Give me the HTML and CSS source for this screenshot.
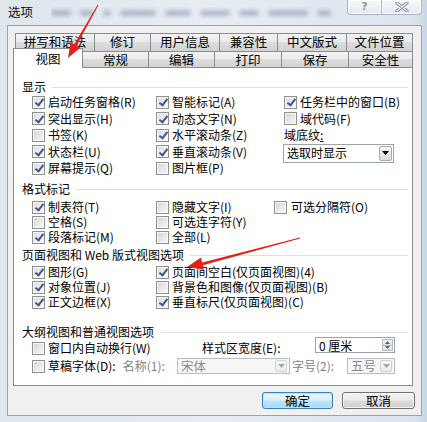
FILE: index.html
```html
<!DOCTYPE html>
<html lang="zh-CN">
<head>
<meta charset="utf-8">
<title>选项</title>
<link rel="stylesheet" href="styles.css">
</head>
<body>
<div class="screen">
  <div class="titlebar">
    <span class="title">选项</span>
    <div class="blur-strip">
      <i class="w20"></i><i class="w14"></i><i class="w8"></i><i class="w36"></i><i class="w26"></i><i class="w30"></i><i class="w20"></i><i class="w40"></i><i class="w14"></i><i class="w26"></i>
    </div>
    <div class="caption">
      <span class="cbtn help">?</span>
      <span class="cbtn close"><svg width="14" height="10" viewBox="0 0 14 10"><path d="M2 1 L12 9 M12 1 L2 9" stroke="#7b8796" stroke-width="3.2" stroke-linecap="round"/><path d="M2 1 L12 9 M12 1 L2 9" stroke="#f7f9fb" stroke-width="1.4" stroke-linecap="round"/></svg></span>
    </div>
  </div>

  <div class="client">
    <div class="tabrow back">
      <div class="tab t80">拼写和语法</div>
      <div class="tab t57">修订</div>
      <div class="tab t70">用户信息</div>
      <div class="tab t59">兼容性</div>
      <div class="tab t70">中文版式</div>
      <div class="tab t67">文件位置</div>
    </div>
    <div class="tabrow front">
      <div class="tab sel t70">视图</div>
      <div class="tab t67">常规</div>
      <div class="tab t67">编辑</div>
      <div class="tab t68">打印</div>
      <div class="tab t68">保存</div>
      <div class="tab t65">安全性</div>
    </div>

    <div class="panel">
      <div class="gtitle">显示</div>
      <div class="grid g1">
        <label class="cbl"><span class="cb on"></span>启动任务窗格(R)</label>
        <label class="cbl"><span class="cb on"></span>智能标记(A)</label>
        <label class="cbl"><span class="cb on"></span>任务栏中的窗口(B)</label>

        <label class="cbl"><span class="cb on"></span>突出显示(H)</label>
        <label class="cbl"><span class="cb on"></span>动态文字(N)</label>
        <label class="cbl"><span class="cb"></span>域代码(F)</label>

        <label class="cbl"><span class="cb"></span>书签(K)</label>
        <label class="cbl"><span class="cb on"></span>水平滚动条(Z)</label>
        <span class="plain">域底纹<u>:</u></span>

        <label class="cbl"><span class="cb on"></span>状态栏(U)</label>
        <label class="cbl"><span class="cb on"></span>垂直滚动条(V)</label>
        <div class="combo shade"><span class="ctext">选取时显示</span><span class="carrow"><svg width="7" height="4" viewBox="0 0 7 4"><path d="M0 0 H7 L3.5 4 Z" fill="#000"/></svg></span></div>

        <label class="cbl"><span class="cb on"></span>屏幕提示(Q)</label>
        <label class="cbl"><span class="cb"></span>图片框(P)</label>
      </div>

      <div class="gtitle s2">格式标记</div>
      <div class="grid g2">
        <label class="cbl"><span class="cb on"></span>制表符(T)</label>
        <label class="cbl"><span class="cb"></span>隐藏文字(I)</label>
        <label class="cbl wide"><span class="cb"></span>可选分隔符(O)</label>

        <label class="cbl"><span class="cb"></span>空格(S)</label>
        <label class="cbl"><span class="cb"></span>可选连字符(Y)</label>
        <span></span>

        <label class="cbl"><span class="cb on"></span>段落标记(M)</label>
        <label class="cbl"><span class="cb"></span>全部(L)</label>
        <span></span>
      </div>

      <div class="gtitle s3">页面视图和 Web 版式视图选项</div>
      <div class="grid g3">
        <label class="cbl"><span class="cb on"></span>图形(G)</label>
        <label class="cbl"><span class="cb on"></span>页面间空白(仅页面视图)(4)</label>

        <label class="cbl"><span class="cb on"></span>对象位置(J)</label>
        <label class="cbl"><span class="cb"></span>背景色和图像(仅页面视图)(B)</label>

        <label class="cbl"><span class="cb on"></span>正文边框(X)</label>
        <label class="cbl"><span class="cb on"></span>垂直标尺(仅页面视图)(C)</label>
      </div>

      <div class="gtitle s4">大纲视图和普通视图选项</div>
      <div class="row4">
        <label class="cbl w170"><span class="cb"></span>窗口内自动换行(W)</label>
        <span class="plain w113">样式区宽度(E):</span>
        <div class="spin"><span class="ctext">0 厘米</span><span class="sarrows"><span class="sbtn"><svg width="5" height="3" viewBox="0 0 5 3"><path d="M0 3 H5 L2.5 0 Z" fill="#58606a"/></svg></span><span class="sbtn"><svg width="5" height="3" viewBox="0 0 5 3"><path d="M0 0 H5 L2.5 3 Z" fill="#58606a"/></svg></span></span></div>
      </div>
      <div class="row4">
        <label class="cbl w145"><span class="cb"></span>草稿字体(D):<span class="dis name">名称(1):</span></label>
        <div class="combo off font"><span class="ctext">宋体</span><span class="carrow"><svg width="7" height="4" viewBox="0 0 7 4"><path d="M0 0 H7 L3.5 4 Z" fill="#a3a8ae"/></svg></span></div>
        <span class="dis size">字号(2):</span>
        <div class="combo off fsize"><span class="ctext">五号</span><span class="carrow"><svg width="7" height="4" viewBox="0 0 7 4"><path d="M0 0 H7 L3.5 4 Z" fill="#a3a8ae"/></svg></span></div>
      </div>
    </div>

    <div class="btns">
      <button class="btn def">确定</button>
      <button class="btn">取消</button>
    </div>
  </div>

  <svg class="arrows" width="427" height="422" viewBox="0 0 427 422">
    <polygon points="98.4,5.2 97.6,4.8 74.2,44.3 70.6,42.2 68,58 80.2,47.7 76.6,45.6" fill="#e3211c"/>
    <polygon points="300.1,238.4 299.9,237.6 202.1,262.5 201,257.6 187,267 204,269.7 202.9,265.3" fill="#e3211c"/>
  </svg>
</div>
</body>
</html>
```
FILE: styles.css
```css
* { box-sizing: border-box; }
html, body { margin: 0; padding: 0; }
body {
  font-family: "Noto Sans CJK SC", "Noto Sans", sans-serif;
  font-size: 12px;
  color: #000;
}
.screen {
  width: 427px;
  height: 422px;
  position: relative;
  overflow: hidden;
  background: linear-gradient(90deg, #dfe6ee 0%, #e8edf3 50%, #dbe4ee 97%, #c6d6e6 100%);
}

/* title bar */
.titlebar { height: 25px; display: flex; align-items: flex-start; }
.title { margin: 4px 0 0 8px; font-size: 12.5px; line-height: 16px; color: #111; }
.blur-strip {
  flex: 1;
  display: flex;
  gap: 9px;
  align-items: center;
  height: 12px;
  margin: 7px 10px 0 18px;
  overflow: hidden;
}
.blur-strip i {
  display: block;
  flex: none;
  height: 6px;
  background: rgba(85, 105, 135, 0.38);
  filter: blur(2px);
  border-radius: 3px;
}
.blur-strip .w8 { width: 8px; }
.blur-strip .w14 { width: 14px; }
.blur-strip .w20 { width: 20px; }
.blur-strip .w26 { width: 26px; }
.blur-strip .w30 { width: 30px; }
.blur-strip .w36 { width: 36px; }
.blur-strip .w40 { width: 40px; }
.caption { display: flex; margin-right: 5px; }
.cbtn {
  height: 15px;
  border: 1px solid #aab4c0;
  border-top: none;
  background: linear-gradient(#f6f8fa, #e4e9ef);
  display: flex;
  align-items: center;
  justify-content: center;
  box-shadow: inset 0 0 0 1px rgba(255,255,255,0.8);
}
.cbtn.help {
  width: 35px;
  border-radius: 0 0 0 4px;
  font-family: "DejaVu Sans", sans-serif;
  font-size: 11px;
  font-weight: bold;
  line-height: 12px;
  color: #8a95a3;
}
.cbtn.close { width: 40px; border-left: none; border-radius: 0 0 4px 0; }

/* client area */
.client {
  margin-left: 7px;
  width: 415px;
  height: 391px;
  border: 1px solid #98a3b1;
  background: #f0f0f0;
  padding: 7px 0 0 5px;
}

/* tabs */
.tabrow { display: flex; }
.tabrow.back { margin-left: 2px; height: 18px; }
.tabrow.front {
  margin-top: -3px;
  height: 20px;
  align-items: flex-end;
  position: relative;
  z-index: 2;
}
.tab {
  flex: none;
  border: 1px solid #898c95;
  border-bottom: none;
  background: linear-gradient(#f3f3f3 0%, #ebebeb 45%, #dddddd 50%, #d2d2d2 100%);
  text-align: center;
  font-size: 12.5px;
  line-height: 14px;
  padding-top: 1px;
  margin-right: -1px;
  height: 18px;
}
.tabrow.front .tab { height: 16px; margin-bottom: 1px; padding-top: 0; line-height: 15px; }
.tabrow.front .tab.sel {
  height: 20px;
  margin-bottom: 0;
  padding-top: 2px;
  line-height: 16px;
  background: #fff;
}
.t57 { width: 57px; }
.t59 { width: 59px; }
.t65 { width: 65px; }
.t67 { width: 67px; }
.t68 { width: 68px; }
.t70 { width: 70px; }
.t80 { width: 80px; }

/* panel */
.panel {
  position: relative;
  z-index: 1;
  margin-top: -1px;
  width: 400px;
  height: 319px;
  border: 1px solid #898c95;
  background: #fff;
  padding: 12px 4px 0 8px;
}
.gtitle {
  height: 14px;
  line-height: 14px;
  display: flex;
  align-items: center;
  white-space: nowrap;
}
.gtitle::after {
  content: "";
  flex: 1;
  height: 1px;
  background: #dcdfe3;
  margin-left: 6px;
}
.gtitle.s2 { margin-top: 5.5px; }
.gtitle.s3 { margin-top: 3.5px; }
.gtitle.s4 { margin-top: 15.5px; }

.grid { display: grid; margin-left: 10px; align-items: center; }
.g1 { grid-template-columns: 124px 128px 1fr; grid-template-rows: repeat(5, 16.5px); }
.g2 { grid-template-columns: 124px 118px 1fr; grid-template-rows: repeat(3, 15px); margin-top: 3.5px; }
.g3 { grid-template-columns: 124px 1fr; grid-template-rows: repeat(3, 15px); margin-top: 2.5px; }
.g2 .wide { gap: 4px; }

.cbl {
  display: flex;
  align-items: center;
  gap: 3px;
  white-space: nowrap;
  line-height: 14px;
}
.plain { white-space: nowrap; line-height: 14px; }
.plain u { text-decoration: underline; }
.cb {
  flex: none;
  width: 13px;
  height: 13px;
  border: 1px solid #8e8f8f;
  background: linear-gradient(135deg, #d2d2d2 0%, #e9e9e9 55%, #f8f8f8 100%);
  box-shadow: inset 0 0 0 1px #f7f7f7;
  position: relative;
}
.cb.on { background: linear-gradient(135deg, #dadada 0%, #eeeeee 55%, #fbfbfb 100%); }
.cb.on::after {
  content: "";
  position: absolute;
  left: 3.5px;
  top: 0.5px;
  width: 3px;
  height: 7px;
  border: solid #3e5689;
  border-width: 0 2px 2px 0;
  transform: rotate(38deg);
}

/* combos */
.combo {
  display: flex;
  align-items: center;
  justify-content: space-between;
  border: 1px solid #9ca3ab;
  background: #fff;
  padding: 1px 1px 1px 3px;
}
.combo .ctext { line-height: 14px; white-space: nowrap; }
.carrow {
  width: 13px;
  height: 100%;
  border: 1px solid #a7acb2;
  border-radius: 2px;
  background: linear-gradient(#f4f4f4, #dcdcdc);
  display: flex;
  align-items: center;
  justify-content: center;
}
.combo.shade {
  grid-column: 3;
  grid-row: 4;
  align-self: start;
  margin-left: -1px;
  width: 111px;
  height: 19px;
}
.combo.off { border-color: #b8bdc3; background: #f7f7f7; height: 16px; padding: 1px 2px 1px 3px; }
.combo.off .ctext { color: #8a8a8a; font-size: 12.5px; }
.combo.off .carrow { border-color: #d0d3d6; background: linear-gradient(#f7f7f7, #ececec); width: 12px; }
.combo.font { width: 113px; }
.combo.fsize { width: 48px; }

/* section 4 rows */
.row4 { display: flex; align-items: center; height: 18px; margin-left: 10px; }
.w170 { width: 170px; }
.w113 { width: 113px; }
.w145 { width: 145px; }
.dis { color: #7f7f7f; white-space: nowrap; line-height: 14px; }
.dis.name { margin-left: 4px; }
.dis.size { width: 57px; padding-left: 2px; }
.spin {
  width: 80px;
  height: 16px;
  margin-bottom: 6px;
  border: 1px solid #9ca3ab;
  background: #fff;
  display: flex;
  align-items: center;
  justify-content: space-between;
  padding: 1px 1px 1px 3px;
}
.spin .ctext { line-height: 13px; white-space: nowrap; }
.sarrows { display: flex; flex-direction: column; width: 11px; height: 100%; }
.sbtn {
  flex: 1;
  display: flex;
  align-items: center;
  justify-content: center;
  border: 1px solid #b5bcc6;
  background: linear-gradient(#f2f4f7, #dde2e8);
}
.sbtn + .sbtn { border-top: none; }

/* buttons */
.btns {
  display: flex;
  justify-content: flex-end;
  gap: 9px;
  margin-top: 6px;
  padding-right: 6px;
}
.btn {
  font-family: inherit;
  font-size: 12.5px;
  line-height: 15px;
  height: 17px;
  width: 73px;
  padding: 0;
  border: 1px solid #707070;
  border-radius: 3px;
  color: #000;
  background: linear-gradient(#f2f2f2 0%, #ebebeb 48%, #dddddd 52%, #cfcfcf 100%);
  box-shadow: inset 0 0 0 1px rgba(255,255,255,0.7);
}
.btn.def {
  width: 71px;
  border-color: #3c7fb1;
  background: linear-gradient(#eaf6fd 0%, #d9f0fc 48%, #bee6fd 52%, #a7d9f5 100%);
  box-shadow: inset 0 0 0 1px #b8e4f8;
}

/* annotation overlay */
.arrows { position: absolute; left: 0; top: 0; z-index: 10; pointer-events: none; }
```
